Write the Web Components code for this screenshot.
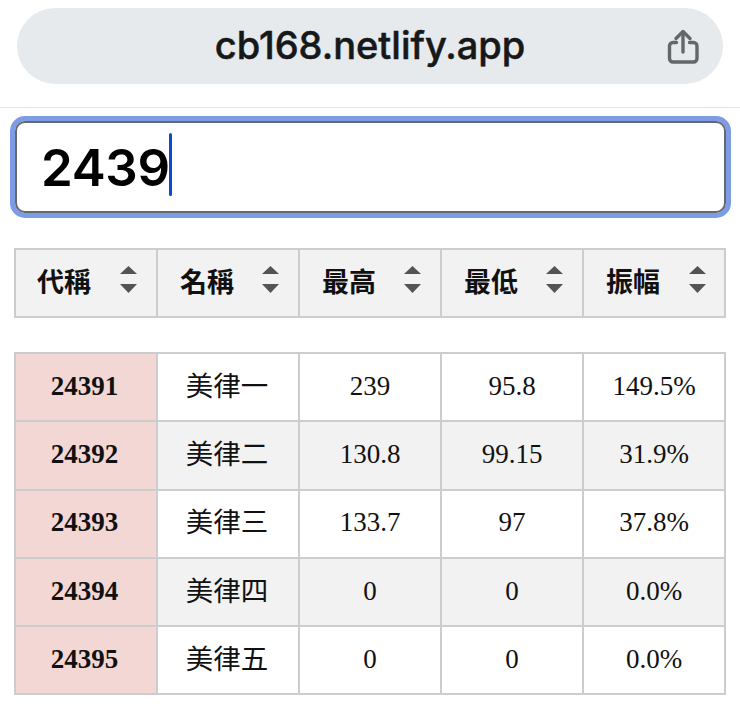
<!DOCTYPE html>
<html lang="zh-Hant">
<head>
<meta charset="utf-8">
<title>cb168</title>
<style>
    html, body { margin: 0; padding: 0; background: #fff; }
    body { width: 740px; height: 719px; overflow: hidden; display: flex; flex-direction: column; }
</style>
</head>
<body>
<browser-bar url="cb168.netlify.app"></browser-bar>
<search-box value="2439"></search-box>
<sort-header>
    <sort-heading>代稱</sort-heading>
    <sort-heading>名稱</sort-heading>
    <sort-heading>最高</sort-heading>
    <sort-heading>最低</sort-heading>
    <sort-heading>振幅</sort-heading>
</sort-header>
<stock-table>
    <stock-row code="24391" name="美律一" high="239" low="95.8" amp="149.5%"></stock-row>
    <stock-row code="24392" name="美律二" high="130.8" low="99.15" amp="31.9%" striped></stock-row>
    <stock-row code="24393" name="美律三" high="133.7" low="97" amp="37.8%"></stock-row>
    <stock-row code="24394" name="美律四" high="0" low="0" amp="0.0%" striped></stock-row>
    <stock-row code="24395" name="美律五" high="0" low="0" amp="0.0%"></stock-row>
</stock-table>

<script>
class BrowserBar extends HTMLElement {
    constructor() {
        super()
        this.attachShadow({ mode: 'open' })
    }

    connectedCallback() {
        this.shadowRoot.innerHTML = `
            <style>
                :host {
                    display: block;
                    flex: none;
                    height: 108px;
                    padding: 8px 17px 0;
                    box-sizing: border-box;
                    border-bottom: 1px solid #e4e4e4;
                }
                .pill {
                    position: relative;
                    height: 76px;
                    border-radius: 38px;
                    background: #e7eaec;
                    display: flex;
                    align-items: center;
                    justify-content: center;
                    font: 500 38px/1 Inter, "Liberation Sans", sans-serif;
                    -webkit-text-stroke: 0.5px #16181a;
                    color: #16181a;
                }
                .url { margin-top: -3px; }
                svg { position: absolute; right: 24px; top: 21px; }
            </style>
            <div class="pill">
                <span class="url">${this.getAttribute('url')}</span>
                <svg width="32" height="36" viewBox="0 0 32 36" fill="none" stroke="#646769" stroke-width="3.4" stroke-linecap="round" stroke-linejoin="round">
                    <path d="M9.5 13.5H6a3.5 3.5 0 0 0-3.5 3.5v12.5A3.5 3.5 0 0 0 6 33h20.5a3.5 3.5 0 0 0 3.5-3.5V17a3.5 3.5 0 0 0-3.5-3.5h-4"/>
                    <path d="M16 23V3"/>
                    <path d="M9 9.5L16 2.5L23 9.5"/>
                </svg>
            </div>
        `
    }
}

class SearchBox extends HTMLElement {
    constructor() {
        super()
        this.attachShadow({ mode: 'open' })
    }

    connectedCallback() {
        this.shadowRoot.innerHTML = `
            <style>
                :host {
                    display: block;
                    flex: none;
                    margin: 8px 9px 0 10px;
                    height: 102px;
                    box-sizing: border-box;
                    border: 5px solid #7c9ce6;
                    border-radius: 15px;
                }
                .field {
                    height: 100%;
                    box-sizing: border-box;
                    border: 2px solid #666870;
                    border-radius: 10px;
                    background: #fff;
                    display: flex;
                    align-items: center;
                    padding-left: 24px;
                    font: 600 51px/1 Inter, "Liberation Sans", sans-serif;
                    letter-spacing: -0.3px;
                    color: #000;
                }
                .caret {
                    width: 3px;
                    height: 63px;
                    border-radius: 2px;
                    background: #0b4ad2;
                    margin: -5px 0 0 -1px;
                }
            </style>
            <div class="field"><span>${this.getAttribute('value')}</span><span class="caret"></span></div>
        `
    }
}

class SortHeader extends HTMLElement {
    constructor() {
        super()
        this.attachShadow({ mode: 'open' })
        this.shadowRoot.innerHTML = `
            <style>
                :host {
                    display: grid;
                    flex: none;
                    grid-template-columns: repeat(5, 142px);
                    margin: 30px 14px 0;
                    border: solid #cdcdcd;
                    border-width: 2px 0 0 2px;
                }
            </style>
            <slot></slot>
        `
    }
}

class SortHeading extends HTMLElement {
    constructor() {
        super()
        this.attachShadow({ mode: 'open' })
        this.shadowRoot.innerHTML = `
            <style>
                :host {
                    display: flex;
                    align-items: center;
                    justify-content: space-between;
                    height: 68px;
                    box-sizing: border-box;
                    padding: 0 19px 6px 22px;
                    background: #f2f2f2;
                    border: solid #cdcdcd;
                    border-width: 0 2px 2px 0;
                    font: 700 27px/1 "Noto Sans CJK TC", sans-serif;
                    color: #111;
                }
                :host(:first-child) { padding-left: 21px; }
                :host(:last-child) { padding: 0 18px 6px 22px; }
                svg { flex: none; margin-top: -2px; }
            </style>
            <slot></slot>
            <svg width="17" height="27" viewBox="0 0 17 27" fill="#545454">
                <path d="M8.5 0L17 8H0Z"/>
                <path d="M0 18H17L8.5 27Z"/>
            </svg>
        `
    }
}

class StockTable extends HTMLElement {
    constructor() {
        super()
        this.attachShadow({ mode: 'open' })
        this.shadowRoot.innerHTML = `
            <style>
                :host {
                    display: block;
                    flex: none;
                    margin: 34px 14px 0;
                    border: solid #cdcdcd;
                    border-width: 2px 0 0 2px;
                }
            </style>
            <slot></slot>
        `
    }
}

class StockRow extends HTMLElement {
    constructor() {
        super()
        this.attachShadow({ mode: 'open' })
    }

    connectedCallback() {
        const attr = name => this.getAttribute(name)
        this.shadowRoot.innerHTML = `
            <style>
                :host {
                    display: grid;
                    grid-template-columns: repeat(5, 142px);
                    background: #fff;
                }
                :host([striped]) { background: #f2f2f2; }
                div {
                    height: 68.3px;
                    box-sizing: border-box;
                    padding-bottom: 2px;
                    display: flex;
                    align-items: center;
                    justify-content: center;
                    border: solid #cdcdcd;
                    border-width: 0 2px 2px 0;
                    font: 27px/1 "Liberation Serif", "Noto Sans CJK TC", serif;
                    color: #111;
                }
                .code { background: #f2d7d5; font-weight: 700; padding-right: 3px; }
                .name { font: 400 27.5px/1 "Noto Sans CJK TC", sans-serif; padding: 0 2px 5px 0; }
            </style>
            <div class="code">${attr('code')}</div>
            <div class="name">${attr('name')}</div>
            <div>${attr('high')}</div>
            <div>${attr('low')}</div>
            <div>${attr('amp')}</div>
        `
    }
}

customElements.define('browser-bar', BrowserBar)
customElements.define('search-box', SearchBox)
customElements.define('sort-header', SortHeader)
customElements.define('sort-heading', SortHeading)
customElements.define('stock-table', StockTable)
customElements.define('stock-row', StockRow)
</script>
</body>
</html>
